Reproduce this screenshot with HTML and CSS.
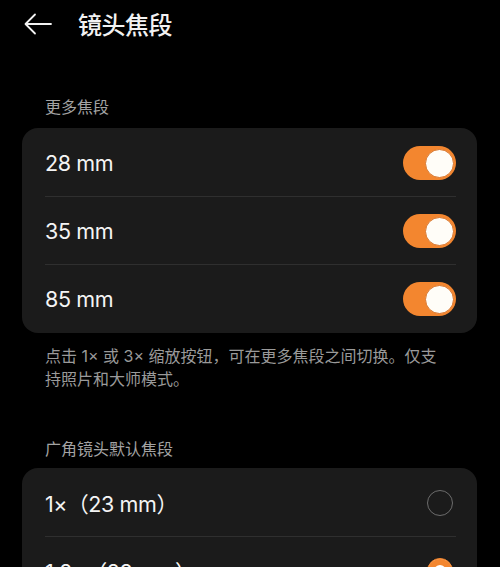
FILE: index.html
```html
<!DOCTYPE html>
<html lang="zh-CN">
<head>
  <meta charset="UTF-8">
  <meta name="viewport" content="width=device-width, initial-scale=1.0">
  <title>镜头焦段</title>
  <link rel="stylesheet" href="styles.css">
</head>
<body>
  <header class="top-bar">
    <button class="back" aria-label="返回">
      <svg width="30" height="24" viewBox="0 0 30 24" fill="none" stroke="#f2f2f2" stroke-width="1.8" stroke-linecap="round" stroke-linejoin="round">
        <path d="M28 12H3"/>
        <path d="M12 2.5L2.5 12L12 21.5"/>
      </svg>
    </button>
    <h1>镜头焦段</h1>
  </header>

  <section class="group">
    <h2 class="group-title">更多焦段</h2>
    <div class="card">
      <div class="row">
        <span class="row-label">28 mm</span>
        <span class="switch on"><span class="knob"></span></span>
      </div>
      <div class="row">
        <span class="row-label">35 mm</span>
        <span class="switch on"><span class="knob"></span></span>
      </div>
      <div class="row">
        <span class="row-label">85 mm</span>
        <span class="switch on"><span class="knob"></span></span>
      </div>
    </div>
    <p class="hint">点击 1× 或 3× 缩放按钮，可在更多焦段之间切换。仅支持照片和大师模式。</p>
  </section>

  <section class="group">
    <h2 class="group-title">广角镜头默认焦段</h2>
    <div class="card">
      <div class="row">
        <span class="row-label">1×（23 mm）</span>
        <span class="radio"></span>
      </div>
      <div class="row">
        <span class="row-label">1.2×（28 mm）</span>
        <span class="radio checked"></span>
      </div>
    </div>
  </section>
</body>
</html>
```

FILE: styles.css
```css
body {
  margin: 0;
  padding: 0;
  background-color: #000;
  color: #f2f2f2;
  font-family: Inter, "Noto Sans CJK SC", sans-serif;
  overflow: hidden;
}

.top-bar {
  height: 47px;
  display: flex;
  align-items: center;
  padding-left: 23px;
}

.back {
  background: none;
  border: none;
  padding: 0;
  width: 30px;
  height: 24px;
  display: flex;
}

.top-bar h1 {
  margin: 0 0 0 25px;
  font-size: 24px;
  font-weight: 500;
  font-family: "Noto Sans CJK SC", sans-serif;
  letter-spacing: -0.5px;
}

.group-title {
  margin: 0;
  padding: 0 45px;
  font-size: 16px;
  line-height: 22px;
  font-weight: 400;
  color: #a3a3a3;
  font-family: "Noto Sans CJK SC", sans-serif;
}

.group:first-of-type .group-title {
  margin-top: 48px;
  margin-bottom: 11px;
}

.group + .group .group-title {
  margin-top: 46px;
  margin-bottom: 9px;
}

.card {
  margin: 0 23px 0 22px;
  background-color: #1b1b1b;
  border-radius: 16px;
  padding: 1px 21px 1px 23px;
}

.row {
  height: 67px;
  display: flex;
  align-items: center;
  justify-content: space-between;
}

.row + .row {
  border-top: 1px solid #2f2f2f;
}

.row-label {
  font-size: 21.5px;
  letter-spacing: -0.4px;
  color: #f4f4f4;
}

.switch {
  width: 53px;
  height: 34px;
  border-radius: 17px;
  background-color: #3a3a3a;
  position: relative;
}

.switch.on {
  background-color: #f3862f;
}

.knob {
  position: absolute;
  top: 3px;
  right: 2px;
  width: 27px;
  height: 27px;
  border-radius: 50%;
  background-color: #fffdf8;
  border: 1px solid #d9762c;
}

.radio {
  width: 24px;
  height: 24px;
  border-radius: 50%;
  border: 1.5px solid #6c6c6c;
  margin-right: 3px;
}

.radio.checked {
  border-color: #f3862f;
  background-color: #f3862f;
  box-shadow: inset 0 0 0 6px #f3862f, inset 0 0 0 13px #fff;
}

.hint {
  margin: 12px 0 0;
  padding: 0 50px 0 45px;
  font-size: 16px;
  line-height: 23px;
  color: #9a9a9a;
}
```
